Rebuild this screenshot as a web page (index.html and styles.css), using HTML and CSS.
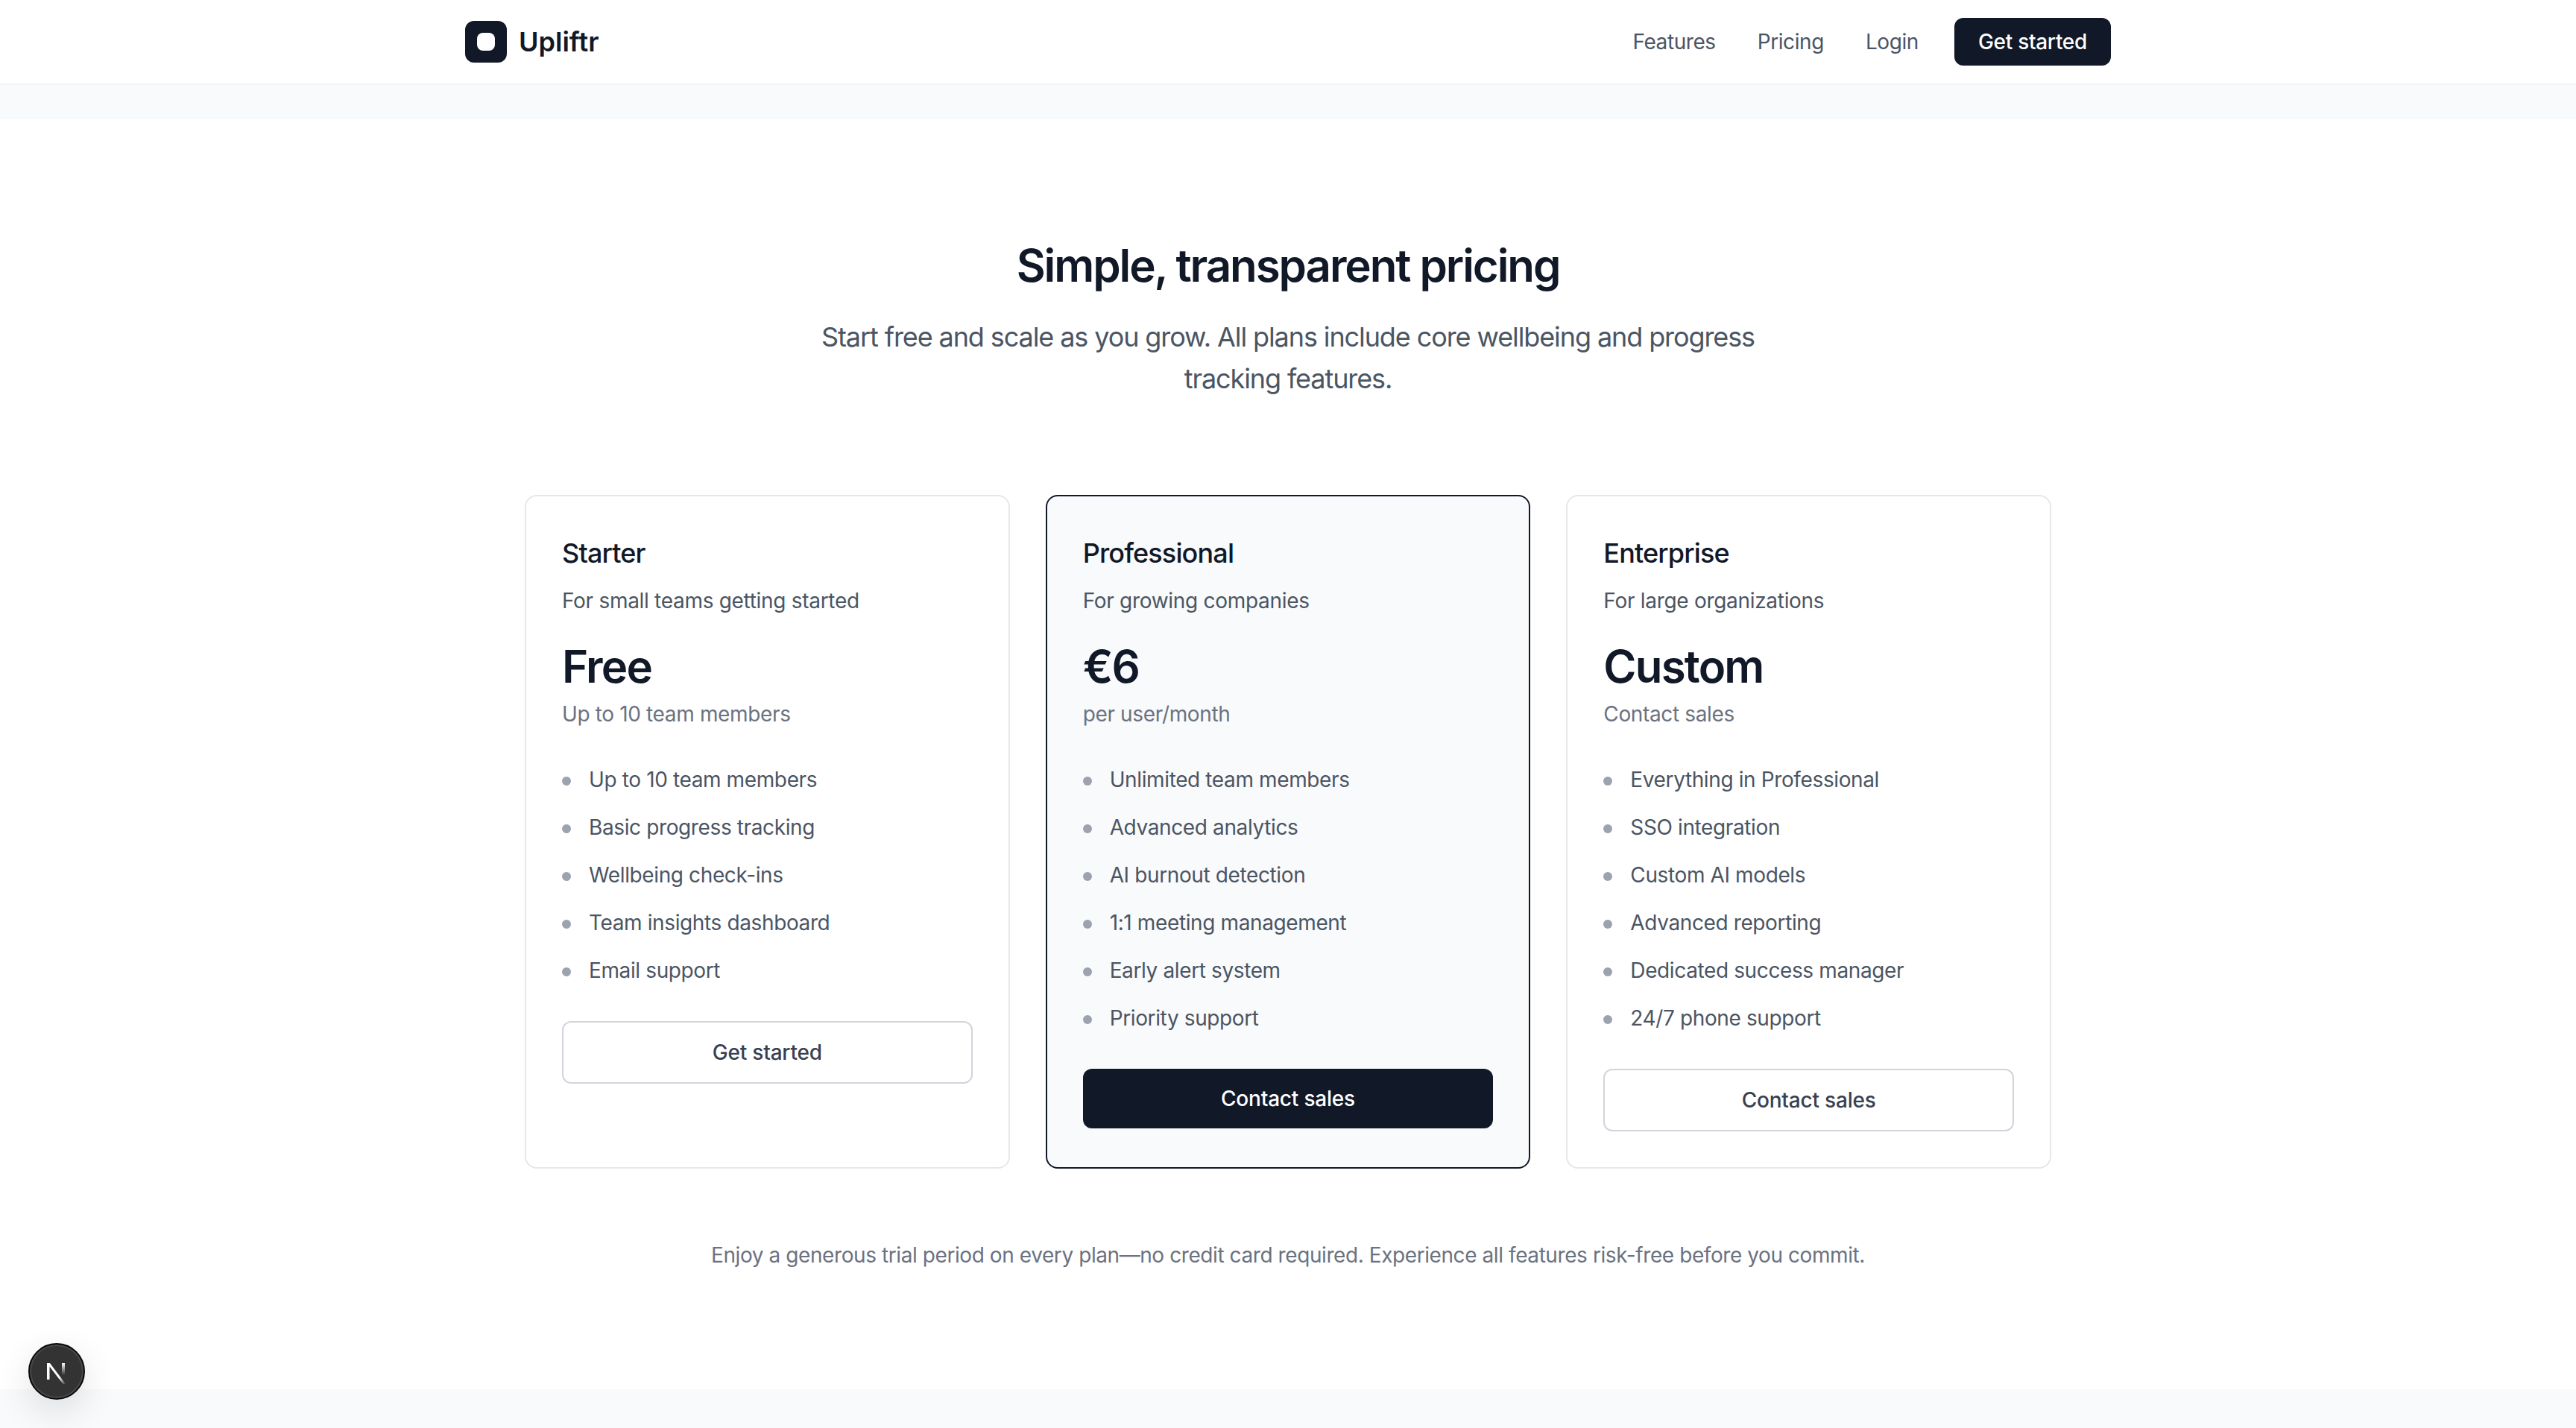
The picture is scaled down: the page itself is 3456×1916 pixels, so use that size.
FILE: index.html
```html
<!DOCTYPE html>
<html lang="en">
<head>
<meta charset="utf-8">
<title>Upliftr - Pricing</title>
<link rel="stylesheet" href="styles.css">
</head>
<body>
<header class="topbar">
  <div class="topbar-inner">
    <a class="brand" href="#">
      <span class="brand-mark"><span class="brand-dot"></span></span>
      <span class="brand-name">Upliftr</span>
    </a>
    <nav class="nav">
      <div class="nav-links">
        <a class="nav-link" href="#">Features</a>
        <a class="nav-link" href="#">Pricing</a>
        <a class="nav-link" href="#">Login</a>
      </div>
      <a class="nav-cta" href="#">Get started</a>
    </nav>
  </div>
</header>
<div class="band-top"></div>
<main class="pricing">
  <h1 class="title">Simple, transparent pricing</h1>
  <p class="subtitle">Start free and scale as you grow. All plans include core wellbeing and progress tracking features.</p>
  <div class="plans">
    <article class="plan">
      <h2 class="plan-name">Starter</h2>
      <p class="plan-desc">For small teams getting started</p>
      <div class="plan-price">Free</div>
      <p class="plan-unit">Up to 10 team members</p>
      <ul class="features">
        <li>Up to 10 team members</li>
        <li>Basic progress tracking</li>
        <li>Wellbeing check-ins</li>
        <li>Team insights dashboard</li>
        <li>Email support</li>
      </ul>
      <a class="btn btn-outline" href="#">Get started</a>
    </article>
    <article class="plan plan-featured">
      <h2 class="plan-name">Professional</h2>
      <p class="plan-desc">For growing companies</p>
      <div class="plan-price">€6</div>
      <p class="plan-unit">per user/month</p>
      <ul class="features">
        <li>Unlimited team members</li>
        <li>Advanced analytics</li>
        <li>AI burnout detection</li>
        <li>1:1 meeting management</li>
        <li>Early alert system</li>
        <li>Priority support</li>
      </ul>
      <a class="btn btn-solid" href="#">Contact sales</a>
    </article>
    <article class="plan">
      <h2 class="plan-name">Enterprise</h2>
      <p class="plan-desc">For large organizations</p>
      <div class="plan-price">Custom</div>
      <p class="plan-unit">Contact sales</p>
      <ul class="features">
        <li>Everything in Professional</li>
        <li>SSO integration</li>
        <li>Custom AI models</li>
        <li>Advanced reporting</li>
        <li>Dedicated success manager</li>
        <li>24/7 phone support</li>
      </ul>
      <a class="btn btn-outline" href="#">Contact sales</a>
    </article>
  </div>
  <p class="note">Enjoy a generous trial period on every plan—no credit card required. Experience all features risk-free before you commit.</p>
</main>
<div class="band-bottom"></div>
<button class="dev-badge" type="button" aria-label="Next.js dev tools">
  <svg class="dev-glyph" viewBox="0 0 40 40" width="40" height="40" aria-hidden="true">
    <defs>
      <linearGradient id="n-diag" x1="12" y1="12" x2="32" y2="38" gradientUnits="userSpaceOnUse">
        <stop offset="0.6" stop-color="#fff"/>
        <stop offset="1" stop-color="#fff" stop-opacity="0"/>
      </linearGradient>
      <linearGradient id="n-right" x1="29" y1="9" x2="29" y2="25" gradientUnits="userSpaceOnUse">
        <stop offset="0" stop-color="#fff"/>
        <stop offset="1" stop-color="#fff" stop-opacity="0"/>
      </linearGradient>
    </defs>
    <path d="M7 9H11L32 37H28.5L10.5 13.5V31H7Z" fill="url(#n-diag)"/>
    <rect x="27" y="9" width="4" height="16" fill="url(#n-right)"/>
  </svg>
</button>
</body>
</html>
```
FILE: styles.css
```css
* { box-sizing: border-box; }
html, body { margin: 0; padding: 0; }
body {
  background: #ffffff;
  color: #111827;
  font-family: Inter, "Liberation Sans", sans-serif;
  height: 1916px;
  overflow: hidden;
  letter-spacing: -0.42px;
}
a { text-decoration: none; color: inherit; }

.topbar { background: #fff; border-bottom: 2px solid #f3f4f6; height: 114px; }
.topbar-inner {
  width: 2208px; height: 112px; margin: 0 auto;
  display: flex; align-items: center; justify-content: space-between;
}
.brand { display: flex; align-items: center; gap: 16px; }
.brand-mark {
  width: 56px; height: 56px; border-radius: 12px; background: #111827;
  display: flex; align-items: center; justify-content: center;
}
.brand-dot { width: 24px; height: 24px; border-radius: 8px; background: #fff; }
.brand-name { font-size: 36px; line-height: 56px; font-weight: 600; color: #111827; letter-spacing: 0; }
.nav { display: flex; align-items: center; gap: 48px; }
.nav-links { display: flex; align-items: center; gap: 56px; }
.nav-link { font-size: 28px; line-height: 40px; color: #4b5563; }
.nav-cta {
  height: 64px; padding: 0 32px; border-radius: 12px; background: #111827; color: #fff;
  font-size: 28px; font-weight: 500; line-height: 64px; letter-spacing: -0.3px;
}

.band-top { height: 46px; background: #f9fafb; }
.band-bottom { height: 52px; background: #f9fafb; }

.pricing { height: 1704px; padding-top: 160px; }
.title {
  margin: 0; text-align: center; font-size: 60px; line-height: 72px; font-weight: 600; color: #111827;
  letter-spacing: -2.08px;
}
.subtitle {
  width: 1344px; margin: 32px auto 0; text-align: center; font-size: 36px; line-height: 56px; color: #4b5563;
  letter-spacing: -1.1px;
}
.plans {
  width: 2048px; margin: 128px auto 0;
  display: grid; grid-template-columns: repeat(3, 1fr); gap: 48px;
}
.plan { border: 2px solid #e5e7eb; border-radius: 16px; padding: 48px; background: #fff; height: 904px; }
.plan-featured { border-color: #111827; background: #f9fafb; }
.plan-name { margin: 0; font-size: 36px; line-height: 56px; font-weight: 500; color: #111827; letter-spacing: -0.85px; }
.plan-desc { margin: 16px 0 0; font-size: 28px; line-height: 40px; color: #4b5563; letter-spacing: -0.3px; }
.plan-price { margin-top: 32px; font-size: 60px; line-height: 72px; font-weight: 600; color: #111827; letter-spacing: -1.8px; }
.plan-unit { margin: 8px 0 0; font-size: 28px; line-height: 40px; color: #6b7280; letter-spacing: -0.36px; }
.features { list-style: none; margin: 48px 0 0; padding: 0; display: flex; flex-direction: column; gap: 24px; }
.features li { position: relative; padding-left: 36px; font-size: 28px; line-height: 40px; color: #4b5563; letter-spacing: -0.38px; }
.features li::before {
  content: ""; position: absolute; left: 0; top: 16px; width: 12px; height: 12px; border-radius: 50%; background: #9ca3af;
}
.btn {
  display: block; margin-top: 48px; text-align: center; font-size: 28px; font-weight: 500; border-radius: 12px; letter-spacing: -0.2px;
}
.btn-outline { height: 84px; line-height: 80px; border: 2px solid #d1d5db; background: #fff; color: #374151; }
.btn-solid { height: 80px; line-height: 80px; background: #111827; color: #fff; }
.note { margin: 96px 0 0; text-align: center; font-size: 28px; line-height: 40px; color: #6b7280; }

.dev-badge {
  position: fixed; left: 38px; top: 1802px; width: 76px; height: 76px; padding: 0;
  border-radius: 50%; background: #333333; border: 2px solid #0a0a0a;
  box-shadow: inset 0 0 0 2px #4a4a4a, 0 16px 48px rgba(0,0,0,0.12);
  display: flex; align-items: center; justify-content: center;
}
.dev-glyph { display: block; }
```
